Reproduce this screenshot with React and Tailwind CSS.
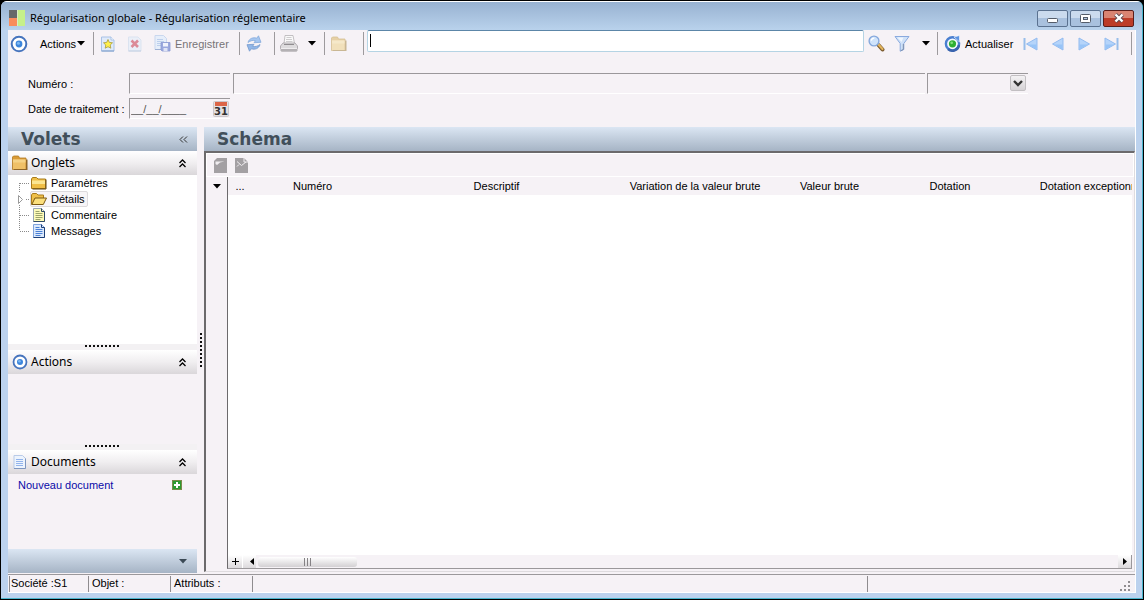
import { useState } from "react";

const COLUMNS = [
  { label: "...", cls: "w-[24px]" },
  { label: "Numéro", cls: "w-[121px]" },
  { label: "Descriptif", cls: "w-[247px]" },
  { label: "Variation de la valeur brute", cls: "w-[150px]" },
  { label: "Valeur brute", cls: "w-[119px]" },
  { label: "Dotation", cls: "w-[122px]" },
  { label: "Dotation exceptionnelle", cls: "w-[172px]" },
];

const TREE = [
  { label: "Paramètres", Icon: TreeFolder },
  { label: "Détails", Icon: TreeFolderOpen, selected: true, expandable: true },
  { label: "Commentaire", Icon: NoteIcon },
  { label: "Messages", Icon: MessageIcon, last: true },
];

/* ── Icons ── */

function AppLogo() {
  return (
    <svg width="16" height="16" viewBox="0 0 16 16" aria-hidden="true">
      <rect width="8" height="8" fill="#666a69" />
      <rect y="8" width="8" height="8" fill="#f98d5c" />
      <rect x="9" width="7" height="16" fill="#c6f08a" />
      <path d="M8 0h1v16H8z" fill="#dbeec4" />
    </svg>
  );
}

function TargetIcon({ size = 18 }) {
  return (
    <svg width={size} height={size} viewBox="0 0 18 18" aria-hidden="true">
      <circle cx="9" cy="9" r="7.300" fill="#fff" stroke="#4674bd" strokeWidth="2" />
      <circle cx="9" cy="9" r="3.400" fill="#3d86dc" />
      <circle cx="8.400" cy="8.200" r="1.500" fill="#7db8f2" />
    </svg>
  );
}

function Caret() {
  return (
    <svg width="8" height="5" viewBox="0 0 8 5" aria-hidden="true">
      <path d="M0 0h8L4 4.500z" fill="#000" />
    </svg>
  );
}

function NewIcon() {
  return (
    <svg width="16" height="16" viewBox="0 0 16 16" aria-hidden="true">
      <path d="M1.500 1h9.500l3 3v11h-12.500z" fill="#dfeafa" stroke="#a9c2e6" />
      <path d="M11 1v3h3" fill="#fff" stroke="#a9c2e6" />
      <path d="M1.500 15h12.500" stroke="#7d9cc8" />
      <path d="M8 3.500l1.300 2.900 3.200.4-2.300 2.200.6 3.200L8 10.700l-2.800 1.500.6-3.200L3.500 6.800l3.200-.4z" fill="#fff04a" stroke="#a99a3a" strokeWidth=".8" />
    </svg>
  );
}

function DeleteIcon() {
  return (
    <svg width="14" height="16" viewBox="0 0 14 16" aria-hidden="true">
      <path d="M.5 1h9.500l3 3v11H.5z" fill="#eaeff8" stroke="#dbe3f0" />
      <path d="M.5 15H13" stroke="#c3cfe2" />
      <path d="M3.500 4.500l6.500 6.500M10 4.500L3.500 11" stroke="#dc8b98" strokeWidth="2.600" />
    </svg>
  );
}

function SaveIcon() {
  return (
    <svg width="17" height="17" viewBox="0 0 17 17" aria-hidden="true">
      <path d="M1 .5h8.500l3 3v11H1z" fill="#e6eefa" stroke="#c9d7ee" />
      <path d="M3 4.500h6M3 6.500h7M3 8.500h5M3 10.500h4" stroke="#bccfec" />
      <path d="M1 14.500h6" stroke="#9db0d4" />
      <path d="M7 7.500h9v8.500H8l-1-1z" fill="#9aa8de" stroke="#8a99d2" strokeWidth=".8" />
      <path d="M9 8h5v3.500H9z" fill="#f0f3fc" />
      <path d="M9.500 13h4v3h-4z" fill="#dfe4f6" />
    </svg>
  );
}

function RefreshIcon() {
  return (
    <svg width="18" height="17" viewBox="0 0 18 17" aria-hidden="true">
      <path d="M3 7.500c1-4 5-5.500 8.800-4.300L13.500.8 16 7.300l-7 .4 1.500-2C7.500 5 5.500 5.700 3 7.500z" fill="#a5c6f0" stroke="#84a9dc" strokeWidth=".8" />
      <path d="M15 9.500c-1 4-5 5.500-8.800 4.300L4.500 16.200 2 9.700l7-.4-1.500 2c3 .7 5 0 7.500-1.800z" fill="#92b7e8" stroke="#7599cd" strokeWidth=".8" />
    </svg>
  );
}

function PrinterIcon() {
  return (
    <svg width="18" height="18" viewBox="0 0 18 18" aria-hidden="true">
      <path d="M4 8.500L5 .5h8l1.500 8z" fill="#fafafa" stroke="#b5b2b5" strokeWidth=".8" />
      <path d="M6.500 2.500h5M6 4.500h6M6 6.500h6.500" stroke="#cfcdcf" />
      <path d="M.5 11l2.500-3h12l2.500 3v2.500H.5z" fill="#dddbdd" stroke="#a3a0a3" strokeWidth=".8" />
      <path d="M4 9.500h10" stroke="#8f8c8f" />
      <path d="M.5 13h17v2.500l-1 1.200h-15l-1-1.200z" fill="#b4b1b4" />
      <path d="M1 13.500h16" stroke="#efedef" />
    </svg>
  );
}

function FolderIcon({ faded }) {
  const body = faded ? "#e6d0a6" : "#d99b36";
  const edge = faded ? "#d6c096" : "#b27c24";
  return (
    <svg width="17" height="16" viewBox="0 0 17 16" aria-hidden="true">
      <path d="M.5 2l1-1h5l1 2H14v11.500H.5z" fill={body} stroke={edge} strokeWidth=".8" />
      <path d="M1 4.500h12.500V14H1z" fill={faded ? "#f1e0bb" : "#efc067"} />
      <path d="M1 4.500h12.500v3H1z" fill={faded ? "#f5e8c9" : "#f5d285"} />
      <path d="M14 4.500h1.500V15H2v-1h12z" fill={faded ? "#c9b794" : "#8d6428"} />
    </svg>
  );
}

function SearchIcon() {
  return (
    <svg width="17" height="17" viewBox="0 0 17 17" aria-hidden="true">
      <path d="M10.500 10l4 4.500" stroke="#7a5a2e" strokeWidth="4" strokeLinecap="round" />
      <path d="M10.500 9.500l4 4.500" stroke="#e2b45c" strokeWidth="2.200" strokeLinecap="round" />
      <circle cx="6" cy="6" r="4.900" fill="#cfe3fb" stroke="#86a8dc" strokeWidth="1.400" />
      <path d="M3.300 5.600a3 3 0 0 1 3-2.500" fill="none" stroke="#fff" strokeWidth="1.400" />
    </svg>
  );
}

function FunnelIcon() {
  return (
    <svg width="16" height="17" viewBox="0 0 16 17" aria-hidden="true">
      <path d="M1 1.500h14L9.800 8.500v6l-3.600 1.700V8.500z" fill="#cfe1f8" stroke="#8aaade" strokeLinejoin="round" />
      <path d="M3.500 2.500h6L7.500 7z" fill="#f1f7fe" />
      <path d="M9.300 9v5.500l-2.600 1.200" fill="none" stroke="#7d8fab" />
    </svg>
  );
}

function UpdateIcon() {
  return (
    <svg width="17" height="17" viewBox="0 0 17 17" aria-hidden="true">
      <circle cx="8.500" cy="8.800" r="6.600" fill="#f4f8fd" stroke="#4a7fd0" strokeWidth="2.400" />
      <path d="M4 14a6.600 6.600 0 0 0 11-4" fill="none" stroke="#3a64ae" strokeWidth="2.400" />
      <path d="M10 2l5.500-1.500V7z" fill="#5b93e2" stroke="#fff" strokeWidth=".6" />
      <circle cx="8.500" cy="8.800" r="3.600" fill="#2fae33" />
      <circle cx="7.700" cy="7.800" r="1.400" fill="#7ee07c" />
    </svg>
  );
}

function NavIcon({ back, bar }) {
  return (
    <svg width="15" height="14" viewBox="0 0 15 14" className={back ? "-scale-x-100" : ""} aria-hidden="true">
      <path d={bar ? "M1 1l10.500 6L1 13z" : "M2 1l10.500 6L2 13z"} fill="#b5d4fa" stroke="#93bbef" />
      <path d={bar ? "M1.500 7.500h8.500L1.500 12.500z" : "M2.500 7.500H11L2.500 12.500z"} fill="#98c4f7" />
      {bar && <path d="M12.500 1h2v12h-2z" fill="#98bdea" />}
    </svg>
  );
}

function CalendarIcon() {
  return (
    <svg width="16" height="16" viewBox="0 0 16 16" aria-hidden="true">
      <rect x=".5" y=".5" width="15" height="15" rx="1" fill="#e4e0e2" stroke="#cbc6ca" />
      <rect x="2" y="1" width="12" height="4" fill="#dc6547" />
      <text x="8" y="13.500" textAnchor="middle" fontSize="10" fontWeight="bold" fontFamily="DejaVu Sans, sans-serif" fill="#333">
        31
      </text>
    </svg>
  );
}

function TreeFolder() {
  return (
    <svg width="16" height="14" viewBox="0 0 16 14" aria-hidden="true">
      <path d="M.5 3l1-1.500h4L7 3h7.500v9.500H.5z" fill="#f0bf46" stroke="#a97c1c" />
      <path d="M1 4.500h13v3.500H1z" fill="#fbe692" />
      <path d="M15 3.500v9.500H1.500" fill="none" stroke="#5e4712" />
    </svg>
  );
}

function TreeFolderOpen() {
  return (
    <svg width="16" height="14" viewBox="0 0 16 14" aria-hidden="true">
      <path d="M.5 12.500V3l1-1.500h4L7 3h5.500v3" fill="#efc04a" stroke="#a97c1c" />
      <path d="M.8 12.500l3.200-6.500h11.500l-3.200 6.500z" fill="#fbdf7c" stroke="#7a5812" />
    </svg>
  );
}

function NoteIcon() {
  return (
    <svg width="16" height="14" viewBox="0 0 16 14" aria-hidden="true">
      <path d="M2.500.5h8l3 3v10h-11z" fill="#fdfbb8" stroke="#9aa7b4" />
      <path d="M10.500.5v3h3v10h-11" fill="none" stroke="#2f4a66" />
      <path d="M4.500 3.500h4M4.500 5.500h7M4.500 7.500h7M4.500 9.500h7M4.500 11.500h5" stroke="#9ba36a" />
    </svg>
  );
}

function MessageIcon() {
  return (
    <svg width="16" height="14" viewBox="0 0 16 14" aria-hidden="true">
      <path d="M2.500.5h8l3 3v10h-11z" fill="#dbe9fc" stroke="#7fa3dc" />
      <path d="M10.500.5v3h3v10h-11" fill="none" stroke="#1d3f78" />
      <path d="M4.500 3.500h4M4.500 5.500h7M4.500 7.500h7M4.500 9.500h7M4.500 11.500h5" stroke="#4a80d6" />
    </svg>
  );
}

function DocumentIcon() {
  return (
    <svg width="16" height="16" viewBox="0 0 16 16" aria-hidden="true">
      <path d="M2 1.500h8.500l3 3v10H2z" fill="#edf4fd" stroke="#b9cbe8" />
      <path d="M13.500 4.500v10H2" fill="none" stroke="#7f97c0" />
      <path d="M4 5.500h7M4 7.500h7M4 9.500h7M4 11.500h7" stroke="#92b4ec" />
    </svg>
  );
}

function Chevrons() {
  return (
    <svg width="7" height="9" viewBox="0 0 7 9" aria-hidden="true">
      <path d="M.5 4l3-3 3 3M.5 8l3-3 3 3" fill="none" stroke="#000" strokeWidth="1.300" />
    </svg>
  );
}

/* vertical link + horizontal branch in front of every tree node */
function Branch({ first, last, expandable }) {
  return (
    <svg width="14" height="16" viewBox="0 0 14 16" aria-hidden="true">
      <path
        d={first ? "M3.500 8v8" : last ? "M3.500 0v8" : "M3.500 0v16"}
        stroke="#8a8a8a"
        strokeDasharray="1 1"
      />
      <path d="M4 8.500h10" stroke="#8a8a8a" strokeDasharray="1 1" />
      {expandable && (
        <path d="M0 2h10v12H0z" fill="#fff" />
      )}
      {expandable && (
        <path d="M2.500 4.500v8l4-4z" fill="#fff" stroke="#9a9a9a" />
      )}
    </svg>
  );
}

/* ── Small parts ── */

function Sep() {
  return <div className="h-[23px] w-px shrink-0 bg-[#9d9a9d]" />;
}

function ToolButton({ label, className, children }) {
  return (
    <button type="button" aria-label={label} className={`flex h-6 shrink-0 items-center justify-center ${className}`}>
      {children}
    </button>
  );
}

function SectionHeader({ icon, title, open, onToggle }) {
  return (
    <button
      type="button"
      aria-expanded={open}
      onClick={onToggle}
      className="flex h-6 w-full shrink-0 items-center bg-linear-to-b from-white via-[#f0eef0] to-[#dad7da] pr-[11px] pl-1 font-['Noto_Sans',sans-serif] text-[12px] leading-4"
    >
      <span className="flex w-[19px]">{icon}</span>
      <span className="flex-1 text-left">{title}</span>
      <Chevrons />
    </button>
  );
}

function Grip() {
  return (
    <div className="flex h-[6px] shrink-0 justify-center bg-[#f3f1f3] pt-px">
      <div className="h-[2px] w-[35px] bg-[repeating-linear-gradient(90deg,#111_0_2px,transparent_2px_4px)]" />
    </div>
  );
}

function StatusCell({ className, children }) {
  return <div className={`h-4 border-l border-[#8f8c8f] ${className}`}>{children}</div>;
}

const FIELD = "h-[21px] border-t border-l border-b border-t-[#9b989b] border-l-[#9b989b] border-b-white bg-transparent outline-none";

const CAPTION_BUTTON = "flex h-[17px] w-[31px] items-center justify-center rounded-[2px] border";
const CAPTION_BLUE = "border-[#5b7290] bg-linear-to-b from-[#cbdbee] from-50% to-[#a9c1de] to-50%";

export default function App() {
  const [query, setQuery] = useState("");
  const [typing, setTyping] = useState(false);
  const [open, setOpen] = useState({ onglets: true, actions: true, documents: true });
  const toggle = (key) => setOpen((p) => ({ ...p, [key]: !p[key] }));

  return (
    <div className="h-screen border border-black bg-black font-['Liberation_Sans',Arial,sans-serif] text-[11px] leading-[14px] text-black">
      <div className="flex h-full flex-col overflow-hidden rounded-t-[6px] border-r border-b border-[#49b4cc] bg-[#bcd2ee]">
        {/* Title bar */}
        <header className="flex h-[29px] shrink-0 items-center border-t border-white bg-linear-to-b from-[#98b2d1] to-[#b9d2ec] pt-1 pr-2 pl-2">
          <AppLogo />
          <h1 className="ml-[5px] flex-1 font-['Noto_Sans',sans-serif] text-[11px] leading-4">
            Régularisation globale - Régularisation réglementaire
          </h1>
          <div className="flex gap-[2px]">
            <button type="button" aria-label="Réduire" className={`${CAPTION_BUTTON} ${CAPTION_BLUE}`}>
              <svg width="11" height="11" viewBox="0 0 11 11">
                <rect x=".5" y="5.500" width="10" height="4" rx="1" fill="#fff" stroke="#545c69" />
              </svg>
            </button>
            <button type="button" aria-label="Agrandir" className={`${CAPTION_BUTTON} ${CAPTION_BLUE}`}>
              <svg width="11" height="9" viewBox="0 0 11 9">
                <rect x=".5" y=".5" width="10" height="8" rx="1" fill="#fff" stroke="#545c69" />
                <rect x="3.500" y="3.500" width="4" height="2" fill="#b3c8e2" stroke="#545c69" />
              </svg>
            </button>
            <button type="button" aria-label="Fermer" className={`${CAPTION_BUTTON} border-[#5a1d1a] bg-linear-to-b from-[#d98472] from-50% to-[#bd3c28] to-50%`}>
              <svg width="12" height="10" viewBox="0 0 12 10">
                <path d="M2.500 1.500l7 7M9.500 1.500l-7 7" stroke="#5b4a52" strokeWidth="4" />
                <path d="M2.500 1.500l7 7M9.500 1.500l-7 7" stroke="#fff" strokeWidth="2.400" />
              </svg>
            </button>
          </div>
        </header>

        <div className="mr-[6px] mb-[5px] ml-[7px] flex min-h-0 flex-1 flex-col border-r border-b border-white bg-[#f6f2f6]">
          {/* Toolbar */}
          <div className="flex h-[27px] shrink-0 items-center pr-[3px]">
            <ToolButton label="Cible" className="w-[22px]">
              <TargetIcon />
            </ToolButton>
            <button type="button" className="flex h-6 w-[63px] shrink-0 items-center gap-px pl-[10px]">
              Actions
              <Caret />
            </button>
            <Sep />
            <ToolButton label="Nouveau" className="w-7"><NewIcon /></ToolButton>
            <ToolButton label="Supprimer" className="w-[26px]"><DeleteIcon /></ToolButton>
            <button type="button" className="flex h-6 w-[91px] shrink-0 items-center gap-1 pl-[6px] text-[#777477]">
              <SaveIcon />
              Enregistrer
            </button>
            <Sep />
            <ToolButton label="Rafraîchir" className="mr-[6px] w-7"><RefreshIcon /></ToolButton>
            <Sep />
            <ToolButton label="Imprimer" className="w-7"><PrinterIcon /></ToolButton>
            <ToolButton label="Options d'impression" className="w-[21px] pr-1"><Caret /></ToolButton>
            <Sep />
            <ToolButton label="Dossier" className="mr-[10px] w-7"><FolderIcon faded /></ToolButton>
            <Sep />
            <div className="relative mb-[5px] ml-[3px] min-w-0 flex-1">
              <input
                type="text"
                aria-label="Recherche"
                value={query}
                onFocus={() => setTyping(true)}
                onBlur={() => setTyping(false)}
                onChange={(e) => setQuery(e.target.value)}
                className="block h-[22px] w-full rounded-[2px] border border-[#b5d4e4] border-t-[#5c86a8] bg-white px-[2px] outline-none"
              />
              {/* idle text cursor */}
              {!typing && !query && (
                <span className="pointer-events-none absolute top-1 left-[3px] h-[13px] w-px bg-black" />
              )}
            </div>
            <ToolButton label="Rechercher" className="w-6"><SearchIcon /></ToolButton>
            <ToolButton label="Filtrer" className="w-7"><FunnelIcon /></ToolButton>
            <ToolButton label="Options de filtre" className="w-[21px] pr-[2px]"><Caret /></ToolButton>
            <Sep />
            <button type="button" className="flex h-6 w-[79px] shrink-0 items-center gap-1 pl-[6px]">
              <UpdateIcon />
              Actualiser
            </button>
            <ToolButton label="Premier" className="w-[27px]"><NavIcon back bar /></ToolButton>
            <ToolButton label="Précédent" className="w-[27px]"><NavIcon back /></ToolButton>
            <ToolButton label="Suivant" className="w-[27px]"><NavIcon /></ToolButton>
            <ToolButton label="Dernier" className="mr-[6px] w-[27px]"><NavIcon bar /></ToolButton>
            <Sep />
          </div>

          {/* Record header */}
          <div className="flex shrink-0 flex-col gap-1 pt-4 pr-[107px] pb-2 pl-5">
            <div className="flex items-center">
              <label htmlFor="numero" className="w-[101px] shrink-0">Numéro :</label>
              <input id="numero" type="text" className={`${FIELD} w-[101px] shrink-0 px-1`} />
              <input type="text" aria-label="Libellé" className={`${FIELD} ml-[3px] min-w-0 flex-1 px-1`} />
              <div className="relative ml-[2px] w-[101px] shrink-0">
                <select aria-label="Statut" className={`${FIELD} block w-full appearance-none px-1`}>
                  <option> </option>
                </select>
                <div className="pointer-events-none absolute top-[2px] right-[2px] flex h-4 w-4 items-center justify-center rounded-[2px] border border-[#c2bfc2] bg-linear-to-b from-[#f4f2f4] to-[#d5d2d5]">
                  <svg width="10" height="7" viewBox="0 0 10 7" aria-hidden="true">
                    <path d="M1 1l4 4 4-4" fill="none" stroke="#333" strokeWidth="2.400" />
                  </svg>
                </div>
              </div>
            </div>
            <div className="flex items-center">
              <label htmlFor="date" className="w-[101px] shrink-0">Date de traitement :</label>
              <div className={`${FIELD} flex w-[101px] items-center pr-px`}>
                <input id="date" type="text" defaultValue="__/__/____" className="w-full min-w-0 flex-1 pl-px text-[#555] outline-none" />
                <button type="button" aria-label="Calendrier"><CalendarIcon /></button>
              </div>
            </div>
          </div>

          <div className="flex min-h-0 flex-1">
            {/* Side panels */}
            <aside className="mb-px flex w-[189px] shrink-0 flex-col">
              <div className="flex h-6 shrink-0 items-center justify-between bg-linear-to-b from-[#dbe6f3] to-[#a6b4c5] pr-[9px] pl-[13px]">
                <h2 className="font-['DejaVu_Sans',Verdana,sans-serif] text-[17px] leading-5 font-bold text-[#414f5a]">Volets</h2>
                <button type="button" aria-label="Réduire les volets">
                  <svg width="9" height="7" viewBox="0 0 9 7">
                    <path d="M4 .5l-3 3 3 3M8 .5l-3 3 3 3" fill="none" stroke="#333" />
                  </svg>
                </button>
              </div>
              <SectionHeader icon={<FolderIcon />} title="Onglets" open={open.onglets} onToggle={() => toggle("onglets")} />
              <ul className="min-h-0 flex-1 overflow-hidden bg-white pl-2">
                {open.onglets &&
                  TREE.map(({ label, Icon, selected, expandable, last }, i) => (
                    <li key={label} className="flex h-4 items-center">
                      <Branch first={i === 0} last={last} expandable={expandable} />
                      <a
                        href="#"
                        className={`flex h-4 items-center gap-1 border pr-[2px] ${
                          selected ? "rounded-[2px] border-[#dcdadc] bg-[#f7f5f7]" : "border-transparent"
                        }`}
                      >
                        <Icon />
                        {label}
                      </a>
                    </li>
                  ))}
              </ul>
              <Grip />
              <SectionHeader icon={<TargetIcon size={16} />} title="Actions" open={open.actions} onToggle={() => toggle("actions")} />
              <div className="h-[70px] shrink-0" />
              <Grip />
              <SectionHeader icon={<DocumentIcon />} title="Documents" open={open.documents} onToggle={() => toggle("documents")} />
              <div className="h-[75px] shrink-0">
                {open.documents && (
                  <div className="flex items-center justify-between pt-1 pr-[15px] pl-[10px]">
                    <a href="#" className="text-[#0a0aa8]">Nouveau document</a>
                    <button type="button" aria-label="Ajouter un document">
                      <svg width="10" height="10" viewBox="0 0 10 10">
                        <rect x=".5" y=".5" width="9" height="9" fill="#2c9a2f" stroke="#7a8a4a" />
                        <path d="M5 2v6M2 5h6" stroke="#fff" strokeWidth="2" />
                      </svg>
                    </button>
                  </div>
                )}
              </div>
              <div className="flex h-6 shrink-0 items-center justify-end bg-linear-to-b from-[#dbe6f3] to-[#a6b4c5] pr-[10px]">
                <svg width="8" height="5" viewBox="0 0 8 5" aria-hidden="true">
                  <path d="M0 0h8L4 4.500z" fill="#3b4955" />
                </svg>
              </div>
            </aside>

            {/* Splitter */}
            <div className="flex w-[7px] shrink-0 items-center justify-center">
              <div className="h-[35px] w-[2px] bg-[repeating-linear-gradient(180deg,#111_0_2px,transparent_2px_4px)]" />
            </div>

            {/* Schema panel */}
            <main className="flex min-w-0 flex-1 flex-col">
              <div className="flex h-6 shrink-0 items-center bg-linear-to-b from-[#dbe6f3] to-[#a6b4c5] pl-[13px]">
                <h2 className="font-['DejaVu_Sans',Verdana,sans-serif] text-[17px] leading-5 font-bold text-[#414f5a]">Schéma</h2>
              </div>
              <div className="mb-[2px] flex min-h-0 flex-1 flex-col border-t-2 border-r border-b border-l-2 border-t-[#6c6a6c] border-r-[#dedbde] border-b-[#dedbde] border-l-[#6c6a6c]">
                <div className="flex h-6 shrink-0 items-center gap-2 border border-white pl-[7px]">
                  <button type="button" aria-label="Ouvrir la grille">
                    <svg width="13" height="15" viewBox="0 0 13 15">
                      <path d="M3 0h10v15H0V3z" fill="#a3a0a3" />
                      <path d="M1.500 6V3.500h9L6 4.500 3 7z" fill="#f0edf0" />
                    </svg>
                  </button>
                  <button type="button" aria-label="Fermer la grille">
                    <svg width="13" height="15" viewBox="0 0 13 15">
                      <path d="M0 0h9l4 4v11H0z" fill="#a3a0a3" />
                      <path d="M9 0v4h4M2 3.500l4.500 4M6.500 7.500L11 4M2 8.500l2-2" fill="none" stroke="#f0edf0" />
                    </svg>
                  </button>
                </div>
                <div className="flex min-h-0 flex-1">
                  <div className="flex w-[21px] shrink-0 justify-center pt-[7px]">
                    <Caret />
                  </div>
                  <div className="mr-[2px] mb-[2px] flex min-w-0 flex-1 flex-col border-b border-l border-b-[#9b989b] border-l-[#6c6a6c] bg-white">
                    <div className="min-h-0 flex-1 overflow-hidden">
                      <table className="w-[955px] table-fixed">
                        <thead>
                          <tr className="h-[18px] bg-[#f6f2f6]">
                            {COLUMNS.map((c) => (
                              <th key={c.label} scope="col" className={`${c.cls} p-0 text-center font-normal whitespace-nowrap`}>
                                {c.label}
                              </th>
                            ))}
                          </tr>
                        </thead>
                        <tbody />
                      </table>
                    </div>
                    {/* Horizontal scroll bar */}
                    <div className="flex h-[13px] shrink-0 items-center bg-[#f6f2f6]">
                      <button type="button" aria-label="Ajouter une ligne" className="flex h-[13px] w-[15px] items-center justify-center border-r border-white bg-linear-to-b from-white to-[#dcd9dc]">
                        <svg width="7" height="7" viewBox="0 0 7 7">
                          <path d="M3.500 0v7M0 3.500h7" stroke="#000" />
                        </svg>
                      </button>
                      <button type="button" aria-label="Défiler à gauche" className="flex h-[13px] w-[13px] items-center justify-end bg-linear-to-b from-white to-[#dcd9dc] pr-[2px]">
                        <svg width="4" height="7" viewBox="0 0 4 7">
                          <path d="M4 0v7L0 3.500z" fill="#000" />
                        </svg>
                      </button>
                      <div className="ml-[2px] flex h-[10px] w-[99px] items-center justify-center gap-[2px] rounded-[3px] bg-linear-to-b from-white to-[#d3d0d3]">
                        <i className="h-[8px] w-px bg-[#858285]" />
                        <i className="h-[8px] w-px bg-[#858285]" />
                        <i className="h-[8px] w-px bg-[#858285]" />
                      </div>
                      <button type="button" aria-label="Défiler à droite" className="ml-auto flex h-[13px] w-[14px] items-center justify-center border-r border-[#9b989b] bg-linear-to-b from-white to-[#dcd9dc]">
                        <svg width="4" height="7" viewBox="0 0 4 7">
                          <path d="M0 0v7l4-3.500z" fill="#000" />
                        </svg>
                      </button>
                    </div>
                  </div>
                </div>
              </div>
            </main>
          </div>

          {/* Status bar */}
          <footer className="flex h-[18px] shrink-0 items-center border-t border-[#9b989b] pl-px">
            <StatusCell className="w-[79px] pl-px">Société :S1</StatusCell>
            <StatusCell className="w-[82px] pl-[3px]">Objet :</StatusCell>
            <StatusCell className="w-[82px] pl-[3px]">Attributs :</StatusCell>
            <StatusCell className="flex-1" />
            <StatusCell className="flex w-[268px] items-end justify-end pr-1">
              <svg width="11" height="11" viewBox="0 0 11 11" aria-hidden="true">
                <path d="M8 0h2v2H8zM4 4h2v2H4zM8 4h2v2H8zM0 8h2v2H0zM4 8h2v2H4zM8 8h2v2H8z" fill="#8f8c8f" />
              </svg>
            </StatusCell>
          </footer>
        </div>
      </div>
    </div>
  );
}
